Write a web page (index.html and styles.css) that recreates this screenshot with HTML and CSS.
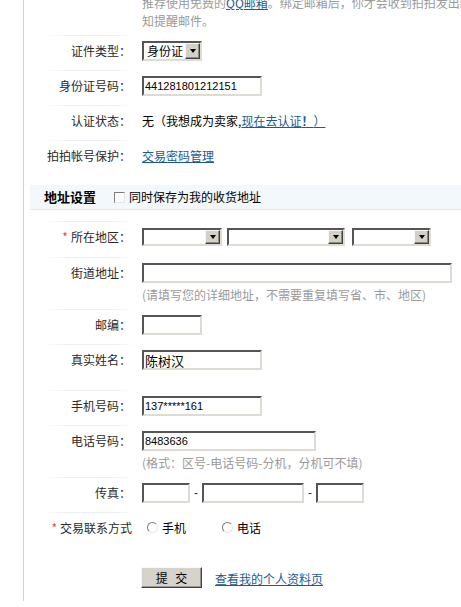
FILE: index.html
```html
<!DOCTYPE html>
<html lang="zh-CN">
<head>
<meta charset="utf-8">
<title>个人资料</title>
<link rel="stylesheet" href="styles.css">
</head>
<body>
<div class="page">
  <div class="intro">推荐使用免费的<a href="#" class="lnk">QQ邮箱</a>。绑定邮箱后，你才会收到拍拍发出的通知提醒邮件。</div>

  <div class="row">
    <div class="lbl">证件类型<span class="colon">：</span></div>
    <div class="fld">
      <div class="sel sel-id"><span class="sel-val">身份证</span><span class="sel-btn"></span></div>
    </div>
  </div>

  <div class="row">
    <div class="lbl">身份证号码<span class="colon">：</span></div>
    <div class="fld"><input class="txt w120" type="text" value="441281801212151"></div>
  </div>

  <div class="row">
    <div class="lbl">认证状态<span class="colon">：</span></div>
    <div class="fld plain">无<span class="paren">（</span>我想成为卖家,<a href="#" class="lnk">现在去认证<b>！</b><span class="paren">）</span></a></div>
  </div>

  <div class="row">
    <div class="lbl">拍拍帐号保护<span class="colon">：</span></div>
    <div class="fld"><a href="#" class="lnk">交易密码管理</a></div>
  </div>

  <div class="band">
    <span class="band-title">地址设置</span>
    <input type="checkbox" class="chk">
    <span class="band-text">同时保存为我的收货地址</span>
  </div>

  <div class="row region">
    <div class="lbl"><em class="req">*</em>所在地区<span class="colon">：</span></div>
    <div class="fld">
      <div class="line">
        <div class="sel small w80"><span class="sel-val"></span><span class="sel-btn"></span></div>
        <div class="sel small w118"><span class="sel-val"></span><span class="sel-btn"></span></div>
        <div class="sel small w79"><span class="sel-val"></span><span class="sel-btn"></span></div>
      </div>
    </div>
  </div>

  <div class="row with-hint">
    <div class="lbl">街道地址<span class="colon">：</span></div>
    <div class="fld">
      <input class="txt w310" type="text" value="">
      <div class="hint">(请填写您的详细地址<span class="paren">，</span>不需要重复填写省、市、地区)</div>
    </div>
  </div>

  <div class="row">
    <div class="lbl">邮编<span class="colon">：</span></div>
    <div class="fld"><input class="txt w60" type="text" value=""></div>
  </div>

  <div class="row gap-after">
    <div class="lbl">真实姓名<span class="colon">：</span></div>
    <div class="fld"><input class="txt w120 cjk" type="text" value="陈树汉"></div>
  </div>

  <div class="row">
    <div class="lbl">手机号码<span class="colon">：</span></div>
    <div class="fld"><input class="txt w120" type="text" value="137*****161"></div>
  </div>

  <div class="row with-hint">
    <div class="lbl">电话号码<span class="colon">：</span></div>
    <div class="fld">
      <input class="txt w174" type="text" value="8483636">
      <div class="hint">(格式<span class="paren">：</span>区号-电话号码-分机<span class="paren">，</span>分机可不填)</div>
    </div>
  </div>

  <div class="row">
    <div class="lbl">传真<span class="colon">：</span></div>
    <div class="fld">
      <div class="line fax">
        <input class="txt w48" type="text" value="">
        <span class="dash">-</span>
        <input class="txt w102" type="text" value="">
        <span class="dash">-</span>
        <input class="txt w48" type="text" value="">
      </div>
    </div>
  </div>

  <div class="row">
    <div class="lbl tight"><em class="req">*</em>交易联系方式</div>
    <div class="fld">
      <div class="line radios">
        <label class="opt first"><input type="radio" name="contact" class="rad">手机</label>
        <label class="opt"><input type="radio" name="contact" class="rad">电话</label>
      </div>
    </div>
  </div>

  <div class="actions">
    <button class="btn" type="button">提 交</button>
    <a href="#" class="lnk">查看我的个人资料页</a>
  </div>
</div>
</body>
</html>
```

FILE: styles.css
```css
html, body {
  margin: 0;
  padding: 0;
  overflow: hidden;
  background: #fff;
}

body {
  font-family: "Noto Sans CJK SC", "Liberation Sans", sans-serif;
  font-size: 12px;
  line-height: 20px;
  color: #333;
}

.page {
  margin-left: 23px;
  border-left: 1px solid #d2d2d2;
  min-height: 607px;
}

.lnk {
  color: #1d5a92;
  text-decoration: underline;
}

.intro {
  margin: -6px 0 0 118px;
  width: 345px;
  line-height: 18px;
  color: #9a9a9a;
  padding-bottom: 5px;
}

.row {
  display: grid;
  grid-template-columns: 90px auto;
  column-gap: 7px;
  margin-left: 21px;
}

.lbl {
  text-align: right;
  padding: 6px 4px 0 0;
  line-height: 20px;
  white-space: nowrap;
  color: #2a2a2a;
  background: linear-gradient(to right, rgba(236, 241, 246, 0), #eaf0f5 25%, #eaf0f5 75%, rgba(236, 241, 246, 0)) top left / 100% 1px no-repeat;
}

.colon,
.paren {
  font-family: "Noto Sans CJK JP", "Noto Sans CJK SC", sans-serif;
}

.lbl.tight {
  padding-right: 3px;
}

.req {
  font-style: normal;
  color: #e04848;
  margin-right: 3px;
}

.fld {
  padding: 6px 0 9px;
  line-height: 20px;
}

.fld.plain {
  color: #000;
}

.fld.plain b {
  font-weight: bold;
}

.line {
  display: flex;
  align-items: center;
}

.txt {
  display: block;
  box-sizing: border-box;
  height: 20px;
  margin: 0;
  padding: 0 1px;
  border-style: solid;
  border-width: 2px;
  border-color: #555 #dedbd4 #dedbd4 #555;
  background: #fff;
  font-family: "Liberation Sans", sans-serif;
  font-size: 11px;
  color: #000;
  outline: none;
}

.txt.cjk {
  font-family: "Noto Sans CJK SC", sans-serif;
  font-size: 13px;
}

.w48 { width: 48px; }
.w60 { width: 60px; }
.w79 { width: 79px; }
.w80 { width: 80px; }
.w102 { width: 102px; }
.w118 { width: 118px; }
.w120 { width: 120px; }
.w174 { width: 174px; }
.w310 { width: 310px; }

.sel {
  display: flex;
  box-sizing: border-box;
  height: 20px;
  border-style: solid;
  border-width: 2px;
  border-color: #555 #dedbd4 #dedbd4 #555;
  background: #fff;
}

.sel-id {
  width: 60px;
}

.sel.small {
  height: 18px;
}

.sel-val {
  flex: 1;
  padding-left: 3px;
  line-height: 16px;
  color: #000;
  font-size: 12px;
}

.sel-btn {
  box-sizing: border-box;
  width: 15px;
  margin: 0;
  background: #d4d0c8;
  border: 1px solid;
  border-color: #f6f6f6 #404040 #404040 #f6f6f6;
  box-shadow: inset -1px -1px 0 #8c8981;
  display: flex;
  align-items: center;
  justify-content: center;
}

.sel-btn::after {
  content: "";
  width: 0;
  height: 0;
  border-left: 3px solid transparent;
  border-right: 3px solid transparent;
  border-top: 4px solid #000;
}

.region .fld {
  padding: 7px 0 11px;
}

.region .line .sel + .sel {
  margin-left: 5px;
}

.region .line .sel:last-child {
  margin-left: 7px;
}

.hint {
  margin-top: 2px;
  color: #9a9a9a;
}

.with-hint .fld {
  padding-bottom: 4px;
}

.gap-after .fld {
  padding-bottom: 20px;
}

.fax .dash {
  color: #333;
  margin: 0 4px;
  font-family: "Liberation Sans", sans-serif;
}

.band {
  margin: 10px 0 11px 6px;
  height: 24px;
  border-bottom: 1px solid #e1e9f0;
  background: #f3f8fc;
  display: flex;
  align-items: center;
  padding-left: 14px;
}

.band-title {
  font-weight: bold;
  font-size: 13px;
  color: #000;
  margin-right: 18px;
}

.band-text {
  color: #000;
}

.chk {
  -webkit-appearance: none;
  appearance: none;
  box-sizing: border-box;
  width: 11px;
  height: 11px;
  margin: 0 4px 0 0;
  border: 1px solid;
  border-color: #7d7d7d #e4e4e4 #e4e4e4 #7d7d7d;
  background: #fbfbfb;
}

.radios .opt {
  display: inline-flex;
  align-items: center;
  color: #000;
}

.radios .opt.first {
  margin-left: 5px;
  margin-right: 36px;
}

.rad {
  -webkit-appearance: none;
  appearance: none;
  box-sizing: border-box;
  width: 11px;
  height: 11px;
  margin: -2px 4px 0 0;
  border-radius: 50%;
  border: 1px solid;
  border-color: #7a7a7a #e6e6e6 #e6e6e6 #7a7a7a;
  background: #fff;
}

.actions {
  margin: 19px 0 0 117px;
  display: flex;
  align-items: center;
}

.actions .lnk {
  margin-left: 13px;
  margin-top: 3px;
}

.btn {
  box-sizing: border-box;
  width: 61px;
  height: 21px;
  margin: 0;
  padding: 0;
  background: #d6d3cc;
  border: 1px solid;
  border-color: #f8f8f8 #404040 #404040 #f8f8f8;
  box-shadow: inset -1px -1px 0 #9a978f;
  font-family: "Noto Sans CJK SC", sans-serif;
  font-size: 12px;
  color: #000;
  word-spacing: 5px;
  line-height: 17px;
}
```
